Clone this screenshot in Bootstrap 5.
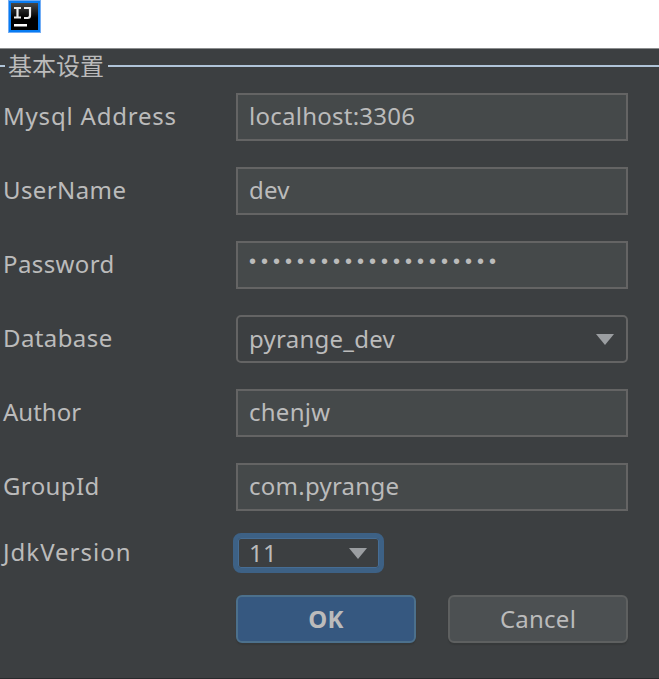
<!DOCTYPE html>
<html lang="zh-CN">
<head>
<meta charset="utf-8">
<meta name="viewport" content="width=device-width, initial-scale=1">
<title>基本设置</title>
<link href="https://cdn.jsdelivr.net/npm/bootstrap@5.3.0/dist/css/bootstrap.min.css" rel="stylesheet">
<style>
body{background:#3c3f41;color:#bbb;font:24px/32px "Noto Sans","Noto Sans CJK SC",sans-serif;height:679px;overflow:hidden;border-bottom:1px solid #292b2d}
.titlebar{height:49px;background:#fff;border-bottom:1px solid #8b8d8e;padding-left:8px}
.titlebar svg{display:block}
.group-title{height:34px;font-family:"Noto Sans CJK SC",sans-serif;line-height:34px}
.group-title .caption-text{margin-top:-2px}
.rule{height:2px;background:#b0c4d8}
.rule-start{width:5px;margin-right:3px}
.rule-end{margin-left:4px}
.settings{padding-top:10px}
.field-row{height:48px;margin-bottom:26px;padding-left:3px}
.field-row label{width:233px;font-size:24px;padding-bottom:2px;letter-spacing:.4px}
.field-row .wide{letter-spacing:.8px}
.field-row .tight{letter-spacing:0}
.field-row .form-control{width:392px;height:48px;border:2px solid #646464;border-radius:0;background-color:#45494a;color:#bbb;font-size:24px;line-height:32px;letter-spacing:.25px;padding:0 10px 3px 11px;box-shadow:none}
.field-row .combo{border-radius:5px;background-color:#3c3f41;padding:0 12px 0 11px}
.field-row .masked{font-family:"Liberation Sans",sans-serif;font-size:20px;letter-spacing:5px;padding-bottom:8px}
.field-row.jdk{height:40px;margin-top:-4px;margin-bottom:22px}
.field-row.jdk label{width:230px;letter-spacing:1px}
.field-row.jdk .combo{width:151px;height:40px;border:5px solid #3d6185;border-radius:8px;box-shadow:inset 0 0 0 1px #466d94;padding:0 12px 0 11px}
.actions{padding-left:236px;gap:32px}
.actions .btn{width:180px;height:48px;padding:0 0 1px;border:2px solid #5e6060;border-radius:6px;font-size:24px;line-height:32px;letter-spacing:.25px;color:#bbb;background:#4c5052;box-shadow:0 2px 1px #36393a}
.actions .ok{background:#365880;border-color:#4c708c;font-weight:700}
</style>
<script src="https://cdn.jsdelivr.net/npm/bootstrap@5.3.0/dist/js/bootstrap.bundle.min.js"></script>
</head>
<body>
<header class="titlebar">
<svg width="33" height="33" viewBox="0 0 33 33" aria-label="IntelliJ IDEA">
<defs><linearGradient id="g" x2="0" y2="1"><stop stop-color="#484848"/><stop offset=".55" stop-color="#000"/></linearGradient></defs>
<path fill="#72adf5" d="M0 0h33v33H0z"/><path fill="#087cf2" d="M1 1h31v31H1z"/><path fill="url(#g)" d="M3 3h27v27H3z"/>
<path d="M6 8h7M9.500 8v10M6 17.500h7M16 8h6v7.500q0 2.500-2.500 2.500h-3.500" fill="none" stroke="#eee" stroke-width="2.200"/><path fill="#fff" d="M6 24h13v2.500H6z"/>
</svg>
</header>
<main>
<div class="group-title d-flex align-items-center"><span class="rule rule-start"></span><span class="caption-text">基本设置</span><span class="rule rule-end flex-grow-1"></span></div>
<form class="settings" onsubmit="return false">
<div class="field-row d-flex align-items-center"><label class="wide" for="a">Mysql Address</label><input id="a" class="form-control" value="localhost:3306"></div>
<div class="field-row d-flex align-items-center"><label for="b">UserName</label><input id="b" class="form-control" value="dev"></div>
<div class="field-row d-flex align-items-center"><label for="c">Password</label><input id="c" class="form-control masked" value="•••••••••••••••••••••"></div>
<div class="field-row d-flex align-items-center"><label>Database</label><div class="form-control combo d-flex align-items-center justify-content-between"><span>pyrange_dev</span><svg width="18" height="11"><path fill="#9b9ea1" d="M0 0h18L9 11z"/></svg></div></div>
<div class="field-row d-flex align-items-center"><label class="tight" for="d">Author</label><input id="d" class="form-control tight" value="chenjw"></div>
<div class="field-row d-flex align-items-center"><label for="e">GroupId</label><input id="e" class="form-control" value="com.pyrange"></div>
<div class="field-row jdk d-flex align-items-center"><label>JdkVersion</label><div class="form-control combo d-flex align-items-center justify-content-between"><span>11</span><svg width="18" height="11"><path fill="#9b9ea1" d="M0 0h18L9 11z"/></svg></div></div>
<div class="actions d-flex"><button class="btn ok">OK</button><button class="btn">Cancel</button></div>
</form>
</main>
</body>
</html>
